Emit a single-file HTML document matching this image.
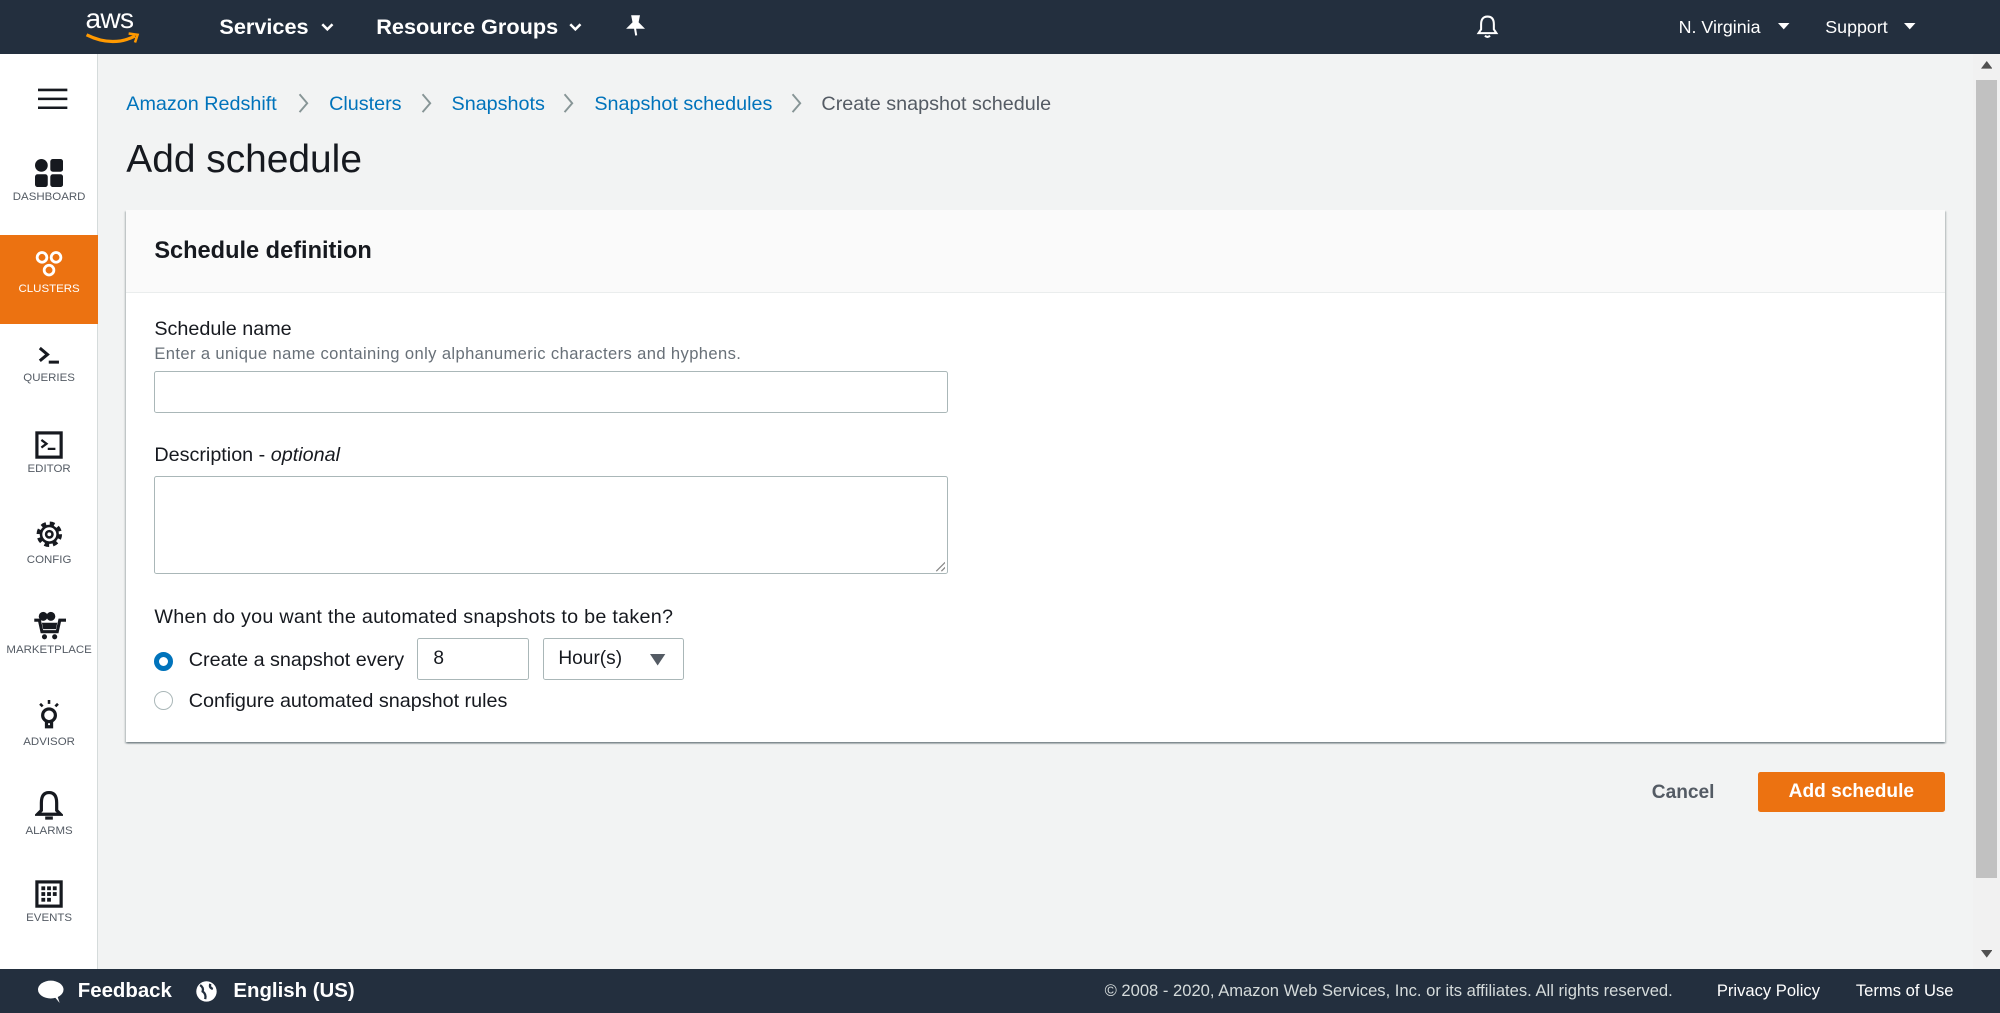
<!DOCTYPE html>
<html><head><meta charset="utf-8"><style>
html{zoom:1.27551}
*{box-sizing:border-box;margin:0;padding:0}
body{width:1568px;height:794px;overflow:hidden;font-family:"Liberation Sans",Arial,sans-serif;background:#f2f3f3;position:relative;color:#16191f}
.abs{position:absolute}
#hdr{left:0;top:0;width:1568px;height:42px;background:#232f3e;color:#fff}
#hdr .t{position:absolute;top:11px;font-weight:bold;font-size:17px}
#hdr .s{position:absolute;top:13px;font-size:14px}
#side{left:0;top:42px;width:77px;height:718px;background:#fff;border-right:1px solid #d5dbdb}
.nav{position:absolute;left:0;width:77px;text-align:center;font-size:9px;color:#545b64}
.nav svg{display:block;margin:0 auto 3px}
#scroll{left:1547px;top:42px;width:21px;height:718px;background:#f1f1f1}
.bc{position:absolute;top:73px;font-size:15.5px;color:#0073bb;white-space:nowrap}
.sep{position:absolute;top:73px}
h1{position:absolute;left:99px;top:108px;font-size:30.5px;font-weight:normal;color:#16191f}
#panel{left:99px;top:165px;width:1426px;height:417px;background:#fff;box-shadow:0 1px 1px rgba(0,28,36,.3),1px 1px 1px rgba(0,28,36,.15),-1px 1px 1px rgba(0,28,36,.15)}
#ph{position:absolute;left:0;top:0;width:100%;height:65px;background:#fafafa;border-bottom:1px solid #eaeded}
.lbl{position:absolute;font-size:15.5px;color:#16191f;white-space:nowrap}
.inp{position:absolute;border:1px solid #aab7b8;background:#fff;border-radius:2px}
#ftr{left:0;top:760px;width:1568px;height:34px;background:#232f3e;color:#fff}
</style></head><body>
<div id="hdr" class="abs">
 <div class="abs" style="left:67px;top:2px;font-size:22px;font-weight:normal;letter-spacing:-0.5px">aws</div>
 <svg class="abs" style="left:66px;top:24px" width="46" height="12" viewBox="0 0 46 12"><path d="M2 3 Q22 13 40 4" stroke="#ff9900" stroke-width="2.5" fill="none"/><path d="M35 2 L42 3 L40 9" stroke="#ff9900" stroke-width="2" fill="none"/></svg>
 <div class="t" style="left:172px">Services</div>
 <svg class="abs" style="left:252px;top:18px" width="10" height="7"><path d="M1 1 L5 5 L9 1" stroke="#fff" stroke-width="2" fill="none"/></svg>
 <div class="t" style="left:295px">Resource Groups</div>
 <svg class="abs" style="left:446px;top:18px" width="10" height="7"><path d="M1 1 L5 5 L9 1" stroke="#fff" stroke-width="2" fill="none"/></svg>
 <svg class="abs" style="left:491px;top:12px" width="15" height="17" viewBox="0 0 15 17"><path d="M5 1 L10 1 L9 6 L13 10 L2 10 L6 6 Z M7 10 L8 16" stroke="#fff" stroke-width="1.6" fill="#fff"/></svg>
 <svg class="abs" style="left:1157px;top:11px" width="18" height="20" viewBox="0 0 18 20"><path d="M9 2 C5 2 4 5 4 8 L4 12 L2 15 L16 15 L14 12 L14 8 C14 5 13 2 9 2 Z M7 17 Q9 19 11 17" stroke="#fff" stroke-width="1.6" fill="none"/></svg>
 <div class="s" style="left:1316px">N. Virginia</div>
 <svg class="abs" style="left:1394px;top:18px" width="9" height="6"><path d="M0 0 L9 0 L4.5 5Z" fill="#fff"/></svg>
 <div class="s" style="left:1431px">Support</div>
 <svg class="abs" style="left:1493px;top:18px" width="9" height="6"><path d="M0 0 L9 0 L4.5 5Z" fill="#fff"/></svg>
</div>
<div id="side" class="abs">
 <svg class="abs" style="left:30px;top:27px" width="23" height="17"><path d="M0 1.5H23M0 8.5H23M0 15.5H23" stroke="#16191f" stroke-width="2"/></svg>
 <div class="nav" style="top:83px"><svg width="22" height="22" viewBox="0 0 22 22"><circle cx="5" cy="5" r="5" fill="#16191f"/><rect x="12" y="0" width="10" height="10" rx="2" fill="#16191f"/><rect x="0" y="12" width="10" height="10" rx="2" fill="#16191f"/><rect x="12" y="12" width="10" height="10" rx="2" fill="#16191f"/></svg>DASHBOARD</div>
 <div class="nav" style="top:142px;height:70px;background:#ec7211;color:#fff;padding-top:13px"><svg width="22" height="22" viewBox="0 0 22 22"><g fill="none" stroke="#fff" stroke-width="2.2"><circle cx="5.5" cy="5" r="3.8"/><circle cx="16.5" cy="5" r="3.8"/><circle cx="11" cy="15" r="3.8"/></g></svg>CLUSTERS</div>
 <div class="nav" style="top:227px"><svg width="20" height="20" viewBox="0 0 20 20"><path d="M3 4 L9 9 L3 14 M10 15 H18" stroke="#16191f" stroke-width="2.4" fill="none"/></svg>QUERIES</div>
 <div class="nav" style="top:296px"><svg width="22" height="22" viewBox="0 0 22 22"><rect x="1.5" y="1.5" width="19" height="19" fill="none" stroke="#16191f" stroke-width="2.5"/><path d="M5 7 L9 10 L5 13 M10 14 H16" stroke="#16191f" stroke-width="1.8" fill="none"/></svg>EDITOR</div>
 <div class="nav" style="top:365px"><svg width="24" height="24" viewBox="0 0 24 24"><circle cx="12" cy="12" r="8" fill="none" stroke="#16191f" stroke-width="4" stroke-dasharray="3.5 2.8"/><circle cx="12" cy="12" r="6.5" fill="none" stroke="#16191f" stroke-width="2"/><circle cx="12" cy="12" r="2.5" fill="none" stroke="#16191f" stroke-width="2"/></svg>CONFIG</div>
 <div class="nav" style="top:436px"><svg width="26" height="24" viewBox="0 0 26 24"><circle cx="8" cy="5" r="3.5" fill="#16191f"/><circle cx="14" cy="5" r="3.5" fill="#16191f"/><path d="M1 8 L5 8 L7 17 L19 17 L21 8 L26 8" stroke="#16191f" stroke-width="2.4" fill="none"/><path d="M7 10 L19 10 L18 15 L8 15Z" fill="#16191f"/><circle cx="9" cy="21" r="2" fill="#16191f"/><circle cx="17" cy="21" r="2" fill="#16191f"/></svg>MARKETPLACE</div>
 <div class="nav" style="top:507px"><svg width="22" height="25" viewBox="0 0 22 25"><path d="M4 3 L6 5 M18 3 L16 5 M11 0 V3" stroke="#16191f" stroke-width="2"/><circle cx="11" cy="12" r="5" fill="none" stroke="#16191f" stroke-width="2.5"/><path d="M9 17 L9 21 L13 21 L13 17" stroke="#16191f" stroke-width="2.5" fill="none"/></svg>ADVISOR</div>
 <div class="nav" style="top:577px"><svg width="22" height="25" viewBox="0 0 22 25"><path d="M11 2 C6 2 5 6 5 10 L5 16 L2 19 L20 19 L17 16 L17 10 C17 6 16 2 11 2Z" fill="none" stroke="#16191f" stroke-width="2.5"/><path d="M8 22 H14" stroke="#16191f" stroke-width="2.5"/></svg>ALARMS</div>
 <div class="nav" style="top:648px"><svg width="22" height="22" viewBox="0 0 22 22"><rect x="1.5" y="1.5" width="19" height="19" fill="none" stroke="#16191f" stroke-width="2.5"/><g fill="#16191f"><rect x="5" y="5" width="3" height="3"/><rect x="9.5" y="5" width="3" height="3"/><rect x="14" y="5" width="3" height="3"/><rect x="5" y="9.5" width="3" height="3"/><rect x="9.5" y="9.5" width="3" height="3"/><rect x="14" y="9.5" width="3" height="3"/><rect x="5" y="14" width="3" height="3"/><rect x="9.5" y="14" width="3" height="3"/></g></svg>EVENTS</div>
</div>
<div id="scroll" class="abs"><div class="abs" style="left:2px;top:21px;width:17px;height:625px;background:#c1c1c1"></div>
<svg class="abs" style="left:6px;top:6px" width="9" height="6"><path d="M0 6 L9 6 L4.5 0Z" fill="#505050"/></svg>
<svg class="abs" style="left:6px;top:703px" width="9" height="6"><path d="M0 0 L9 0 L4.5 6Z" fill="#505050"/></svg></div>
<div class="bc" style="left:99px">Amazon Redshift</div>
<div class="bc" style="left:258px">Clusters</div>
<div class="bc" style="left:354px">Snapshots</div>
<div class="bc" style="left:466px">Snapshot schedules</div>
<div class="bc" style="left:644px;color:#545b64">Create snapshot schedule</div>
<svg class="sep" style="left:233px;top:73px" width="10" height="16"><path d="M2 1 L8 8 L2 15" stroke="#879596" stroke-width="1.5" fill="none"/></svg>
<svg class="sep" style="left:329px;top:73px" width="10" height="16"><path d="M2 1 L8 8 L2 15" stroke="#879596" stroke-width="1.5" fill="none"/></svg>
<svg class="sep" style="left:441px;top:73px" width="10" height="16"><path d="M2 1 L8 8 L2 15" stroke="#879596" stroke-width="1.5" fill="none"/></svg>
<svg class="sep" style="left:619px;top:73px" width="10" height="16"><path d="M2 1 L8 8 L2 15" stroke="#879596" stroke-width="1.5" fill="none"/></svg>
<h1>Add schedule</h1>
<div id="panel" class="abs">
 <div id="ph"><div class="abs" style="left:22px;top:21px;font-size:18.5px;font-weight:bold">Schedule definition</div></div>
 <div class="lbl" style="left:22px;top:84px">Schedule name</div>
 <div class="abs" style="left:22px;top:105px;font-size:13px;color:#687078;letter-spacing:0.3px">Enter a unique name containing only alphanumeric characters and hyphens.</div>
 <div class="inp" style="left:22px;top:126px;width:622px;height:33px"></div>
 <div class="lbl" style="left:22px;top:183px">Description - <i>optional</i></div>
 <div class="inp" style="left:22px;top:208px;width:622px;height:77px"><svg class="abs" style="right:1px;bottom:1px" width="8" height="8"><path d="M8 1 L1 8 M8 5 L5 8" stroke="#888" stroke-width="1"/></svg></div>
 <div class="lbl" style="left:22px;top:310px;letter-spacing:0.2px">When do you want the automated snapshots to be taken?</div>
 <div class="abs" style="left:22px;top:346px;width:15px;height:15px;border-radius:50%;border:4.5px solid #0073bb;background:#fff"></div>
 <div class="lbl" style="left:49px;top:344px">Create a snapshot every</div>
 <div class="inp" style="left:228px;top:335px;width:88px;height:33px;font-size:15px;padding:7px 12px">8</div>
 <div class="inp" style="left:327px;top:335px;width:110px;height:33px;font-size:15px;padding:7px 11px">Hour(s)<svg class="abs" style="left:83px;top:12px" width="12" height="9"><path d="M0 0 L12 0 L6 9Z" fill="#545b64"/></svg></div>
 <div class="abs" style="left:22px;top:377px;width:15px;height:15px;border-radius:50%;border:1px solid #aab7b8;background:#fff"></div>
 <div class="lbl" style="left:49px;top:376px">Configure automated snapshot rules</div>
</div>
<div class="abs" style="left:1295px;top:613px;font-size:15px;font-weight:bold;color:#545b64">Cancel</div>
<div class="abs" style="left:1378px;top:605px;width:147px;height:32px;background:#ec7211;border-radius:2px;color:#fff;font-size:15px;font-weight:bold;text-align:center;line-height:32px">Add schedule</div>
<div id="ftr" class="abs">
 <svg class="abs" style="left:30px;top:8px" width="21" height="18" viewBox="0 0 21 18"><ellipse cx="10" cy="7.5" rx="10" ry="7" fill="#fff"/><path d="M12 12 L17 18 L15 12Z" fill="#fff"/></svg>
 <div class="abs" style="left:61px;top:8px;font-size:16px;font-weight:bold">Feedback</div>
 <svg class="abs" style="left:153px;top:8px" width="18" height="18" viewBox="0 0 18 18"><circle cx="9" cy="9" r="8" fill="#fff"/><path d="M4 4 Q7 6 6 9 Q9 11 8 15 M12 3 Q11 6 14 7" stroke="#232f3e" stroke-width="1.8" fill="none"/></svg>
 <div class="abs" style="left:183px;top:8px;font-size:16px;font-weight:bold">English (US)</div>
 <div class="abs" style="left:866px;top:9px;font-size:13px;color:#d5dbdb">© 2008 - 2020, Amazon Web Services, Inc. or its affiliates. All rights reserved.</div>
 <div class="abs" style="left:1346px;top:9px;font-size:13px">Privacy Policy</div>
 <div class="abs" style="left:1455px;top:9px;font-size:13px">Terms of Use</div>
</div>
</body></html>
